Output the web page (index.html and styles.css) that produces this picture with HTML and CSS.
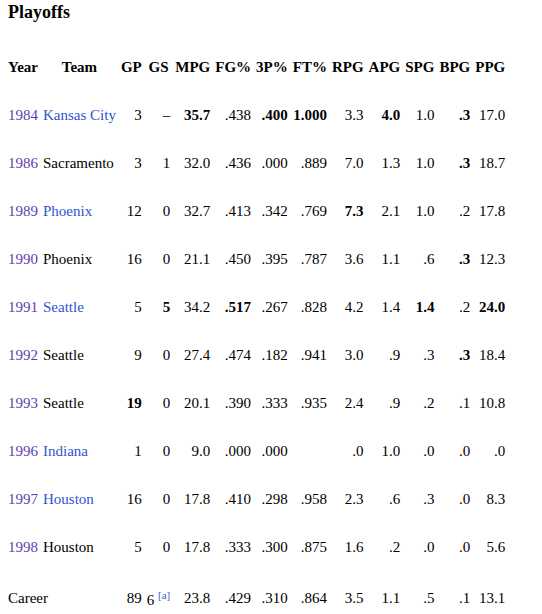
FILE: index.html
```html
<!DOCTYPE html>
<html>
<head>
<meta charset="utf-8">
<link rel="stylesheet" href="styles.css">
</head>
<body>
<h3 class="title">Playoffs</h3>
<table class="stats">
<thead>
<tr><th>Year</th><th>Team</th><th>GP</th><th>GS</th><th>MPG</th><th>FG%</th><th>3P%</th><th>FT%</th><th>RPG</th><th>APG</th><th>SPG</th><th>BPG</th><th>PPG</th></tr>
</thead>
<tbody>
<tr><td class="l"><a class="yr">1984</a></td><td class="l"><a class="tm">Kansas City</a></td><td>3</td><td>–</td><td><b>35.7</b></td><td>.438</td><td><b>.400</b></td><td><b>1.000</b></td><td>3.3</td><td><b>4.0</b></td><td>1.0</td><td><b>.3</b></td><td>17.0</td></tr>
<tr><td class="l"><a class="yr">1986</a></td><td class="l">Sacramento</td><td>3</td><td>1</td><td>32.0</td><td>.436</td><td>.000</td><td>.889</td><td>7.0</td><td>1.3</td><td>1.0</td><td><b>.3</b></td><td>18.7</td></tr>
<tr><td class="l"><a class="yr">1989</a></td><td class="l"><a class="tm">Phoenix</a></td><td>12</td><td>0</td><td>32.7</td><td>.413</td><td>.342</td><td>.769</td><td><b>7.3</b></td><td>2.1</td><td>1.0</td><td>.2</td><td>17.8</td></tr>
<tr><td class="l"><a class="yr">1990</a></td><td class="l">Phoenix</td><td>16</td><td>0</td><td>21.1</td><td>.450</td><td>.395</td><td>.787</td><td>3.6</td><td>1.1</td><td>.6</td><td><b>.3</b></td><td>12.3</td></tr>
<tr><td class="l"><a class="yr">1991</a></td><td class="l"><a class="tm">Seattle</a></td><td>5</td><td><b>5</b></td><td>34.2</td><td><b>.517</b></td><td>.267</td><td>.828</td><td>4.2</td><td>1.4</td><td><b>1.4</b></td><td>.2</td><td><b>24.0</b></td></tr>
<tr><td class="l"><a class="yr">1992</a></td><td class="l">Seattle</td><td>9</td><td>0</td><td>27.4</td><td>.474</td><td>.182</td><td>.941</td><td>3.0</td><td>.9</td><td>.3</td><td><b>.3</b></td><td>18.4</td></tr>
<tr><td class="l"><a class="yr">1993</a></td><td class="l">Seattle</td><td><b>19</b></td><td>0</td><td>20.1</td><td>.390</td><td>.333</td><td>.935</td><td>2.4</td><td>.9</td><td>.2</td><td>.1</td><td>10.8</td></tr>
<tr><td class="l"><a class="yr">1996</a></td><td class="l"><a class="tm">Indiana</a></td><td>1</td><td>0</td><td>9.0</td><td>.000</td><td>.000</td><td></td><td>.0</td><td>1.0</td><td>.0</td><td>.0</td><td>.0</td></tr>
<tr><td class="l"><a class="yr">1997</a></td><td class="l"><a class="tm">Houston</a></td><td>16</td><td>0</td><td>17.8</td><td>.410</td><td>.298</td><td>.958</td><td>2.3</td><td>.6</td><td>.3</td><td>.0</td><td>8.3</td></tr>
<tr><td class="l"><a class="yr">1998</a></td><td class="l">Houston</td><td>5</td><td>0</td><td>17.8</td><td>.333</td><td>.300</td><td>.875</td><td>1.6</td><td>.2</td><td>.0</td><td>.0</td><td>5.6</td></tr>
<tr><td class="l" colspan="2">Career</td><td>89</td><td>6 <sup class="note">[a]</sup></td><td>23.8</td><td>.429</td><td>.310</td><td>.864</td><td>3.5</td><td>1.1</td><td>.5</td><td>.1</td><td>13.1</td></tr>
</tbody>
</table>
</body>
</html>
```
FILE: styles.css
```css
body {
  margin: 0 8px;
  padding-top: 2px;
  font-family: "Liberation Serif", "Times New Roman", serif;
  font-size: 15px;
  color: #000;
  background: #fff;
}
.title {
  margin: 0 0 19px 0;
  font-size: 18px;
  font-weight: bold;
}
.stats {
  border-spacing: 3px 2px;
  margin-left: -4px;
  font-size: 15px;
}
.stats th,
.stats td {
  padding: 15px 1px;
  line-height: 16px;
  vertical-align: middle;
}
.stats th {
  text-align: center;
  font-weight: bold;
}
.stats td {
  text-align: right;
}
.stats td.l {
  text-align: left;
}
.yr {
  color: #5b3fb0;
}
.tm {
  color: #2f54d0;
}
.note {
  color: #3a5fcf;
  font-size: 11px;
}
```
